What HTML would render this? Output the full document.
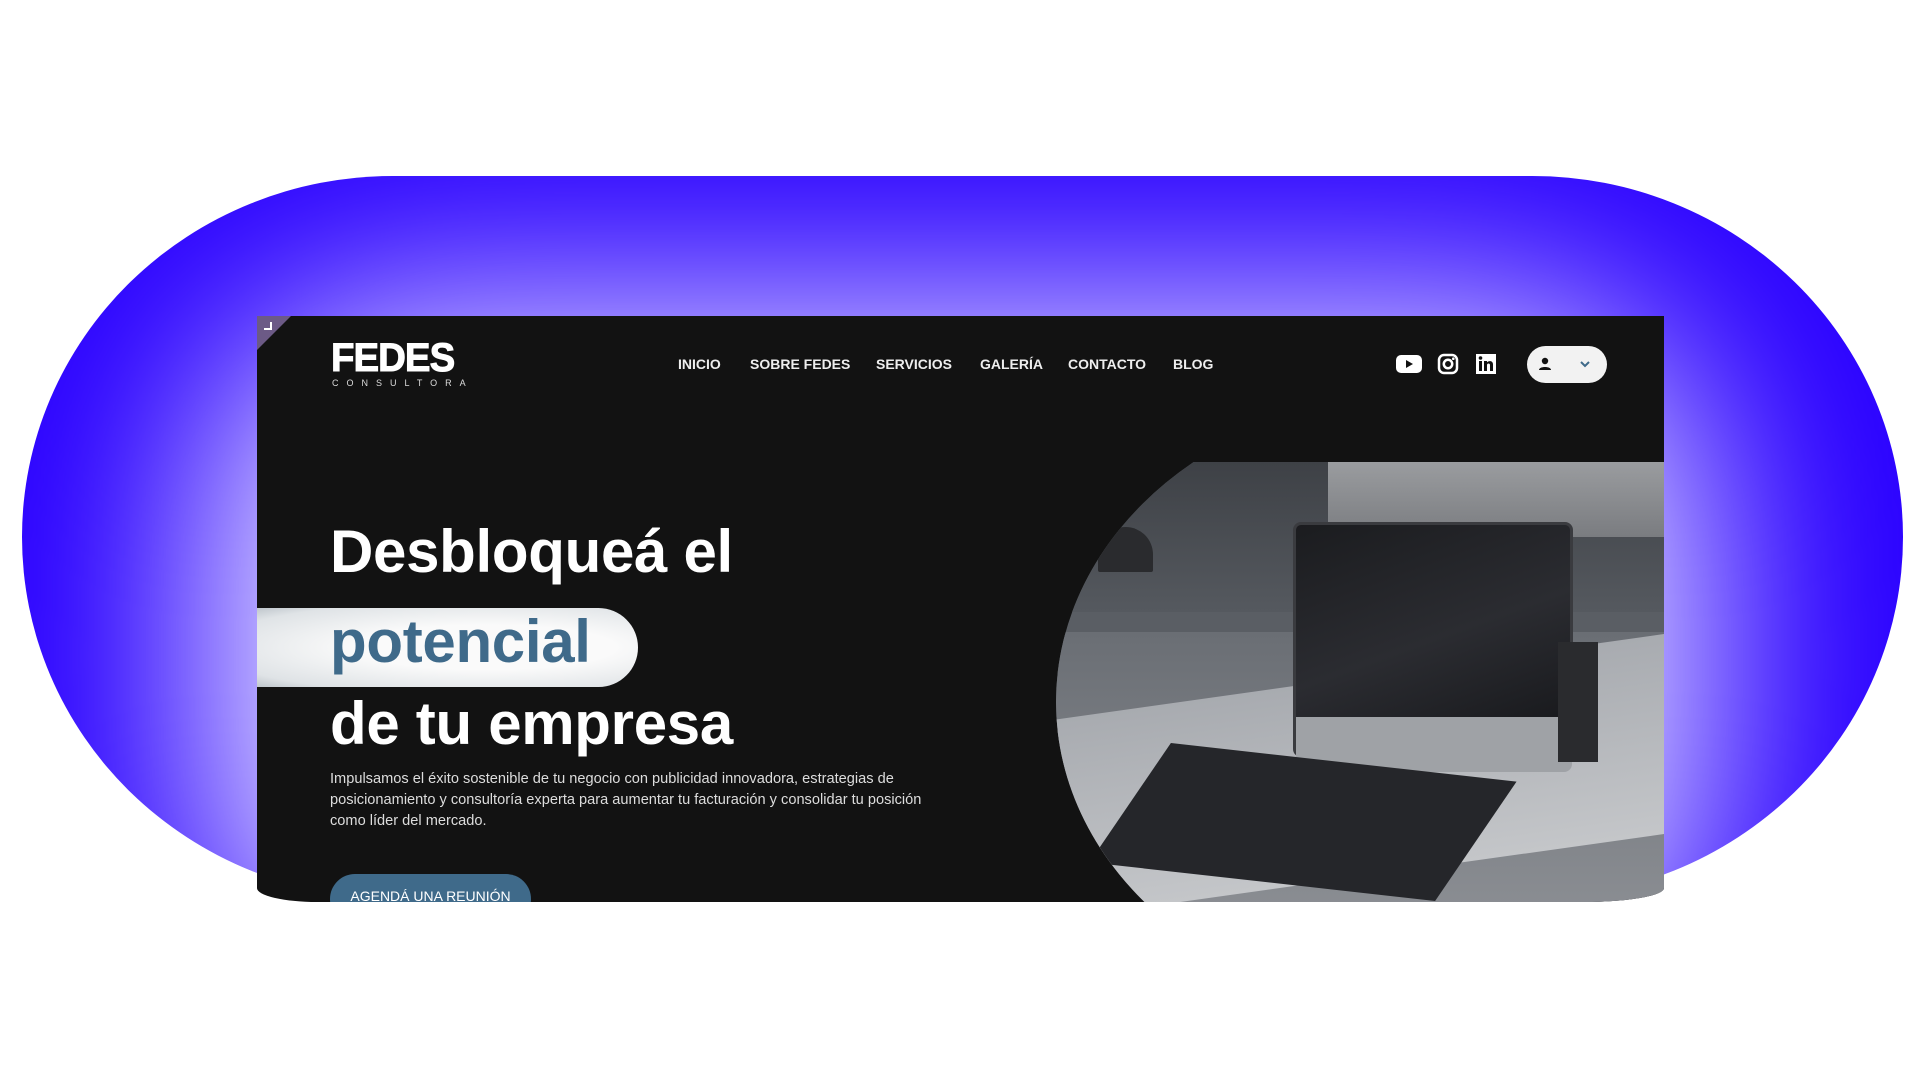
<!DOCTYPE html>
<html><head><meta charset="utf-8"><style>
*{margin:0;padding:0;box-sizing:border-box}
body{width:1920px;height:1080px;background:#fff;position:relative;overflow:hidden;font-family:"Liberation Sans",sans-serif}
#blob{position:absolute;left:22px;top:176px;width:1881px;height:722px;border-radius:380px/370px;background:#2a00ff;overflow:hidden}
#glow{position:absolute;left:180px;top:130px;width:1500px;height:700px;background:rgba(235,232,255,1);filter:blur(110px);border-radius:200px}
#panel{position:absolute;left:257px;top:316px;width:1407px;height:586px;background:#121212;overflow:hidden;border-bottom-left-radius:60px 14px;border-bottom-right-radius:80px 14px}
#corner{position:absolute;left:0;top:0;width:0;height:0;border-top:34px solid #6c5a86;border-right:34px solid transparent}
#corner i{position:absolute;left:7px;top:-28px;width:8px;height:8px;border-right:2px solid #fff;border-bottom:2px solid #fff}
.logo{position:absolute;left:74px;top:22px;color:#fff;font-weight:900;font-size:40px;letter-spacing:-1px;line-height:40px;transform:scaleX(0.96);transform-origin:left;-webkit-text-stroke:1px #fff}
.sub{position:absolute;left:75px;top:62px;color:#ddd;font-size:9px;letter-spacing:8px}
.nav{position:absolute;top:40px;color:#eee;font-size:14px;font-weight:bold}
.ic{position:absolute;top:37px}
.pill{position:absolute;top:30px;width:80px;height:37px;background:#f2f2f2;border-radius:19px}
h1{position:absolute;left:73px;color:#fff;font-weight:bold;font-size:60px;letter-spacing:-0.3px;line-height:60px}
#hl{position:absolute;left:0;top:292px;width:381px;height:79px;border-radius:0 40px 40px 0;background:radial-gradient(ellipse at 60% 50%,#fafafa 40%,#dfe3e6 85%,#bfc6cc)}
p{position:absolute;left:73px;top:453px;width:620px;color:#ddd;font-size:14.6px;line-height:21px}
.btn{position:absolute;left:73px;top:558px;width:201px;height:50px;background:#3f6a8a;border-radius:25px;color:#fff;font-size:14px;padding-top:14px;text-align:center}
#photo{position:absolute;left:781px;top:146px;width:626px;height:440px;clip-path:ellipse(375px 310px at 393px 240px);background:#5a5e64;overflow:hidden}
#photo div{position:absolute}
</style></head><body>
<div id="blob"><div id="glow"></div></div>
<div id="panel">
<div id="corner"><i></i></div>
<div class="logo">FEDES</div>
<div class="sub">CONSULTORA</div>
<div class="nav" style="left:421px">INICIO</div>
<div class="nav" style="left:493px">SOBRE FEDES</div>
<div class="nav" style="left:619px">SERVICIOS</div>
<div class="nav" style="left:723px">GALERÍA</div>
<div class="nav" style="left:811px">CONTACTO</div>
<div class="nav" style="left:916px">BLOG</div>
<svg class="ic" style="left:1138px" width="28" height="22" viewBox="0 0 28 22"><rect x="1" y="2" width="26" height="18" rx="5" fill="#fff"/><path d="M11 7l7 4-7 4z" fill="#111"/></svg>
<svg class="ic" style="left:1180px" width="22" height="22" viewBox="0 0 22 22"><rect x="2" y="2" width="18" height="18" rx="5" fill="none" stroke="#fff" stroke-width="2.5"/><circle cx="11" cy="11" r="4.2" fill="none" stroke="#fff" stroke-width="2.5"/><circle cx="16.3" cy="5.7" r="1.3" fill="#fff"/></svg>
<svg class="ic" style="left:1218px" width="22" height="22" viewBox="0 0 22 22"><rect x="1" y="1" width="20" height="20" fill="#fff"/><rect x="4" y="8" width="3" height="10" fill="#111"/><circle cx="5.5" cy="5" r="1.8" fill="#111"/><path d="M9 8h3v1.5c1-1.8 6-2.4 6 2V18h-3v-6c0-2-3-2-3 0v6H9z" fill="#111"/></svg>
<div class="pill" style="left:1270px"><svg style="position:absolute;left:10px;top:10px" width="16" height="16" viewBox="0 0 16 16"><circle cx="8" cy="5" r="3.2" fill="#111"/><path d="M2 14c0-4 12-4 12 0z" fill="#111"/></svg><svg style="position:absolute;left:52px;top:13px" width="12" height="10" viewBox="0 0 12 10"><path d="M2 3l4 4 4-4" stroke="#3f6a8a" stroke-width="2" fill="none"/></svg></div>
<h1 style="top:206px">Desbloqueá el</h1>
<div id="hl"></div>
<h1 style="top:296px;color:#3f6a8a">potencial</h1>
<h1 style="top:378px">de tu empresa</h1>
<p>Impulsamos el éxito sostenible de tu negocio con publicidad innovadora, estrategias de posicionamiento y consultoría experta para aumentar tu facturación y consolidar tu posición como líder del mercado.</p>
<div class="btn">AGENDÁ UNA REUNIÓN</div>
<div id="photo">
<div style="left:0;top:0;width:626px;height:150px;background:linear-gradient(#3e4146,#55595f)"></div>
<div style="left:290px;top:0;width:336px;height:75px;background:linear-gradient(#9a9c9f,#7a7c80)"></div>
<div style="left:0;top:170px;width:626px;height:300px;background:linear-gradient(#6a6e74,#8d9095)"></div>
<div style="left:0;top:260px;width:626px;height:200px;background:linear-gradient(#a8abb0,#c4c6c9);transform:skewY(-8deg);transform-origin:left top"></div>
<div style="left:255px;top:60px;width:280px;height:235px;background:linear-gradient(160deg,#1b1c1f,#2b2c31 50%,#141518);border:3px solid #3a3b3f;border-radius:8px"></div>
<div style="left:258px;top:255px;width:276px;height:55px;background:#9fa2a6;border-radius:0 0 8px 8px"></div>
<div style="left:80px;top:300px;width:370px;height:120px;background:#25262a;transform:skewX(-30deg) rotate(6deg)"></div>
<div style="left:60px;top:65px;width:55px;height:45px;background:#2a2b2e;border-radius:28px 28px 2px 2px"></div>
<div style="left:520px;top:180px;width:40px;height:120px;background:#2a2b2e"></div>
</div>
</div>
</body></html>
